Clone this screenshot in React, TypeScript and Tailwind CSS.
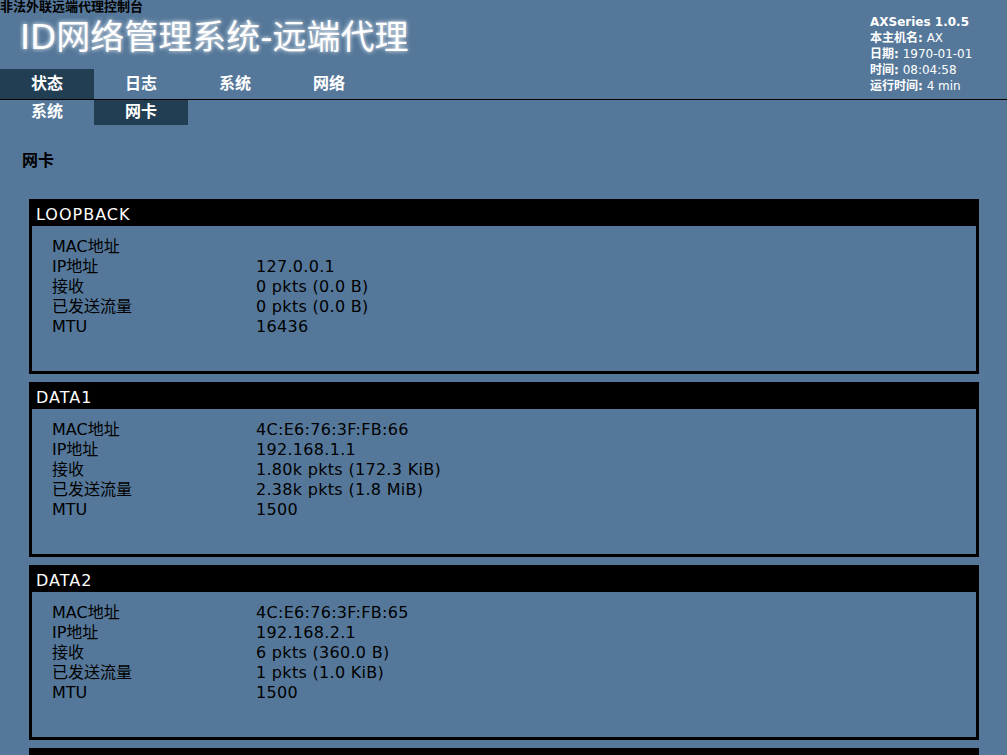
import React from "react";

type Row = { label: string; value: string };
type Iface = { name: string; rows: Row[] };

const ifaces: Iface[] = [
  {
    name: "LOOPBACK",
    rows: [
      { label: "MAC地址", value: "" },
      { label: "IP地址", value: "127.0.0.1" },
      { label: "接收", value: "0 pkts (0.0 B)" },
      { label: "已发送流量", value: "0 pkts (0.0 B)" },
      { label: "MTU", value: "16436" },
    ],
  },
  {
    name: "DATA1",
    rows: [
      { label: "MAC地址", value: "4C:E6:76:3F:FB:66" },
      { label: "IP地址", value: "192.168.1.1" },
      { label: "接收", value: "1.80k pkts (172.3 KiB)" },
      { label: "已发送流量", value: "2.38k pkts (1.8 MiB)" },
      { label: "MTU", value: "1500" },
    ],
  },
  {
    name: "DATA2",
    rows: [
      { label: "MAC地址", value: "4C:E6:76:3F:FB:65" },
      { label: "IP地址", value: "192.168.2.1" },
      { label: "接收", value: "6 pkts (360.0 B)" },
      { label: "已发送流量", value: "1 pkts (1.0 KiB)" },
      { label: "MTU", value: "1500" },
    ],
  },
  {
    name: "DATA3",
    rows: [
      { label: "MAC地址", value: "4C:E6:76:3F:FB:64" },
      { label: "IP地址", value: "192.168.3.1" },
      { label: "接收", value: "0 pkts (0.0 B)" },
      { label: "已发送流量", value: "0 pkts (0.0 B)" },
      { label: "MTU", value: "1500" },
    ],
  },
];

const mainMenu = ["状态", "日志", "系统", "网络"];
const subMenu = ["系统", "网卡"];

const IfaceCard: React.FC<{ iface: Iface }> = ({ iface }) => (
  <div className="border-[3px] border-black mb-[8px]">
    <div className="bg-black text-white h-[24px] leading-[26px] pl-[4px] text-[16px] tracking-[1px]">
      {iface.name}
    </div>
    <div className="pl-[20px] pt-[11px] pb-[34px]">
      {iface.rows.map((r) => (
        <div key={r.label} className="flex h-[20px] leading-[20px] text-[16px] text-black">
          <div className="w-[204px]">{r.label}</div>
          <div className="tracking-[0.3px]">{r.value}</div>
        </div>
      ))}
    </div>
  </div>
);

export default function App() {
  return (
    <div
      className="min-h-screen bg-[#55789a] text-black"
      style={{ fontFamily: '"DejaVu Sans", "Noto Sans CJK SC", sans-serif' }}
    >
      <div className="flex justify-between border-b border-black">
        <div>
          <div className="text-[13px] font-bold leading-[14px] h-[14px]">非法外联远端代理控制台</div>
          <div className="pl-[20px] h-[55px] leading-[46px] text-[34px] text-white [text-shadow:0_0_4px_#ffffff]">
            ID网络管理系统-远端代理
          </div>
          <div className="flex">
            {mainMenu.map((m, i) => (
              <div
                key={m}
                className={`w-[94px] h-[30px] leading-[30px] text-center text-white font-bold text-[16px] ${
                  i === 0 ? "bg-[#213e53]" : ""
                }`}
              >
                {m}
              </div>
            ))}
          </div>
        </div>
        <div className="w-[137px] pt-[14px] text-[12px] leading-[16px] text-white">
          <div className="font-bold">AXSeries 1.0.5</div>
          <div>
            <span className="font-bold">本主机名:</span> AX
          </div>
          <div>
            <span className="font-bold">日期:</span> 1970-01-01
          </div>
          <div>
            <span className="font-bold">时间:</span> 08:04:58
          </div>
          <div>
            <span className="font-bold">运行时间:</span> 4 min
          </div>
        </div>
      </div>

      <div className="flex">
        {subMenu.map((m, i) => (
          <div
            key={m}
            className={`w-[94px] h-[25px] leading-[24px] text-center text-white font-bold text-[16px] ${
              i === 1 ? "bg-[#213e53]" : ""
            }`}
          >
            {m}
          </div>
        ))}
      </div>

      <div className="pl-[22px] pt-[26px] text-[16px] font-bold leading-[20px]">网卡</div>

      <div className="ml-[29px] mr-[28px] mt-[28px]">
        {ifaces.map((f) => (
          <IfaceCard key={f.name} iface={f} />
        ))}
      </div>
    </div>
  );
}
